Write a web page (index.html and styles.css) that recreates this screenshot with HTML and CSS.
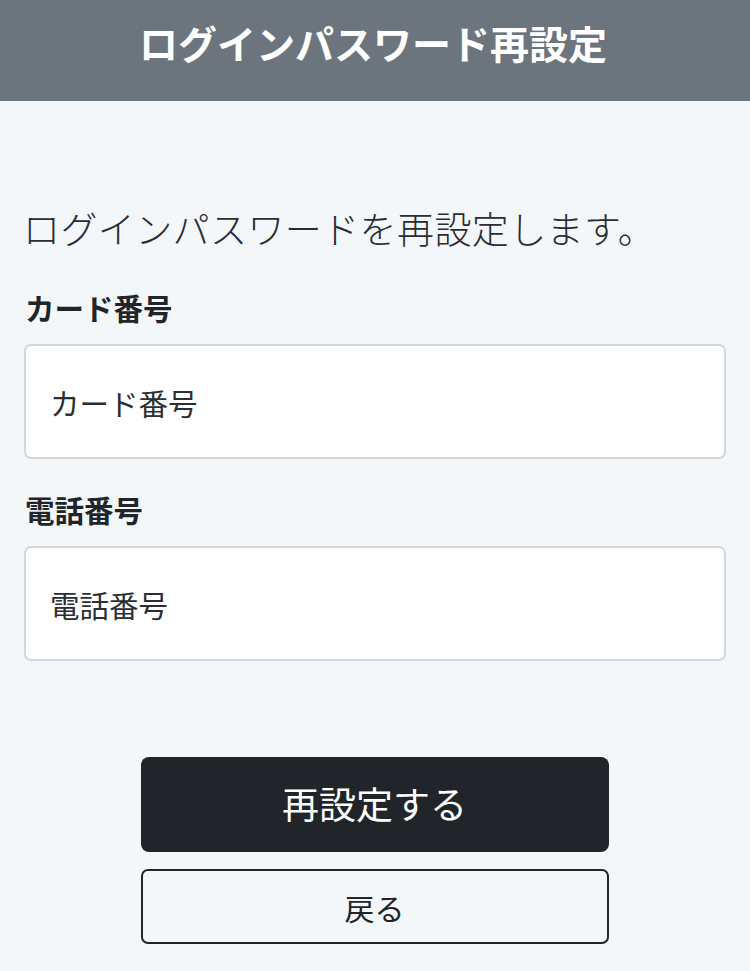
FILE: index.html
```html
<!DOCTYPE html>
<html lang="ja">
<head>
<meta charset="utf-8">
<title>ログインパスワード再設定</title>
<link rel="stylesheet" href="styles.css">
</head>
<body>
<header class="header">
  <h1 class="title">ログインパスワード再設定</h1>
</header>
<main class="main">
  <p class="intro">ログインパスワードを再設定します。</p>
  <form class="form">
    <label class="label" for="card">カード番号</label>
    <input class="input" id="card" type="text" placeholder="カード番号">
    <label class="label label-second" for="tel">電話番号</label>
    <input class="input" id="tel" type="text" placeholder="電話番号">
    <div class="actions">
      <button class="btn btn-primary" type="button">再設定する</button>
      <button class="btn btn-outline" type="button">戻る</button>
    </div>
  </form>
</main>
</body>
</html>
```

FILE: styles.css
```css
html, body {
  margin: 0;
  padding: 0;
}
body {
  background: #f4f7fa;
  font-family: "Noto Sans CJK JP", "Noto Sans", sans-serif;
  color: #212529;
  width: 750px;
  min-height: 971px;
}
.header {
  height: 101px;
  background: #6c757d;
  display: flex;
  align-items: center;
  justify-content: center;
}
.title {
  margin: 0;
  color: #ffffff;
  font-size: 39px;
  font-weight: 700;
  line-height: 1;
  padding-bottom: 16px;
  padding-right: 4px;
}
.main {
  padding: 0 25px 0 24px;
}
.intro {
  margin: 99px 0 0 -1px;
  font-size: 37px;
  line-height: 56px;
  font-weight: 300;
  letter-spacing: 0.4px;
  color: #2a2e33;
}
.form {
  display: flex;
  flex-direction: column;
}
.label {
  margin: 29px 0 14px 1px;
  font-size: 29.5px;
  line-height: 45px;
  font-weight: 700;
  color: #212529;
}
.label-second {
  margin-top: 28px;
}
.input {
  box-sizing: border-box;
  height: 115px;
  width: 702px;
  margin: 0;
  padding: 0 24px;
  border: 2px solid #d3d6da;
  border-radius: 7px;
  background: #ffffff;
  font-family: inherit;
  font-size: 29.5px;
  color: #212529;
  outline: none;
}
.input::placeholder {
  color: #2b2f33;
  opacity: 1;
}
.actions {
  margin-top: 96px;
  display: flex;
  flex-direction: column;
  align-items: center;
  gap: 17px;
}
.btn {
  box-sizing: border-box;
  width: 468px;
  font-family: inherit;
  margin: 0;
  cursor: pointer;
  padding: 0;
}
.btn-primary {
  height: 95px;
  background: #212529;
  color: #ffffff;
  border: none;
  border-radius: 8px;
  font-size: 37px;
  padding-bottom: 4px;
}
.btn-outline {
  height: 75px;
  background: transparent;
  color: #212529;
  border: 2px solid #212529;
  border-radius: 7px;
  font-size: 30px;
}
```
